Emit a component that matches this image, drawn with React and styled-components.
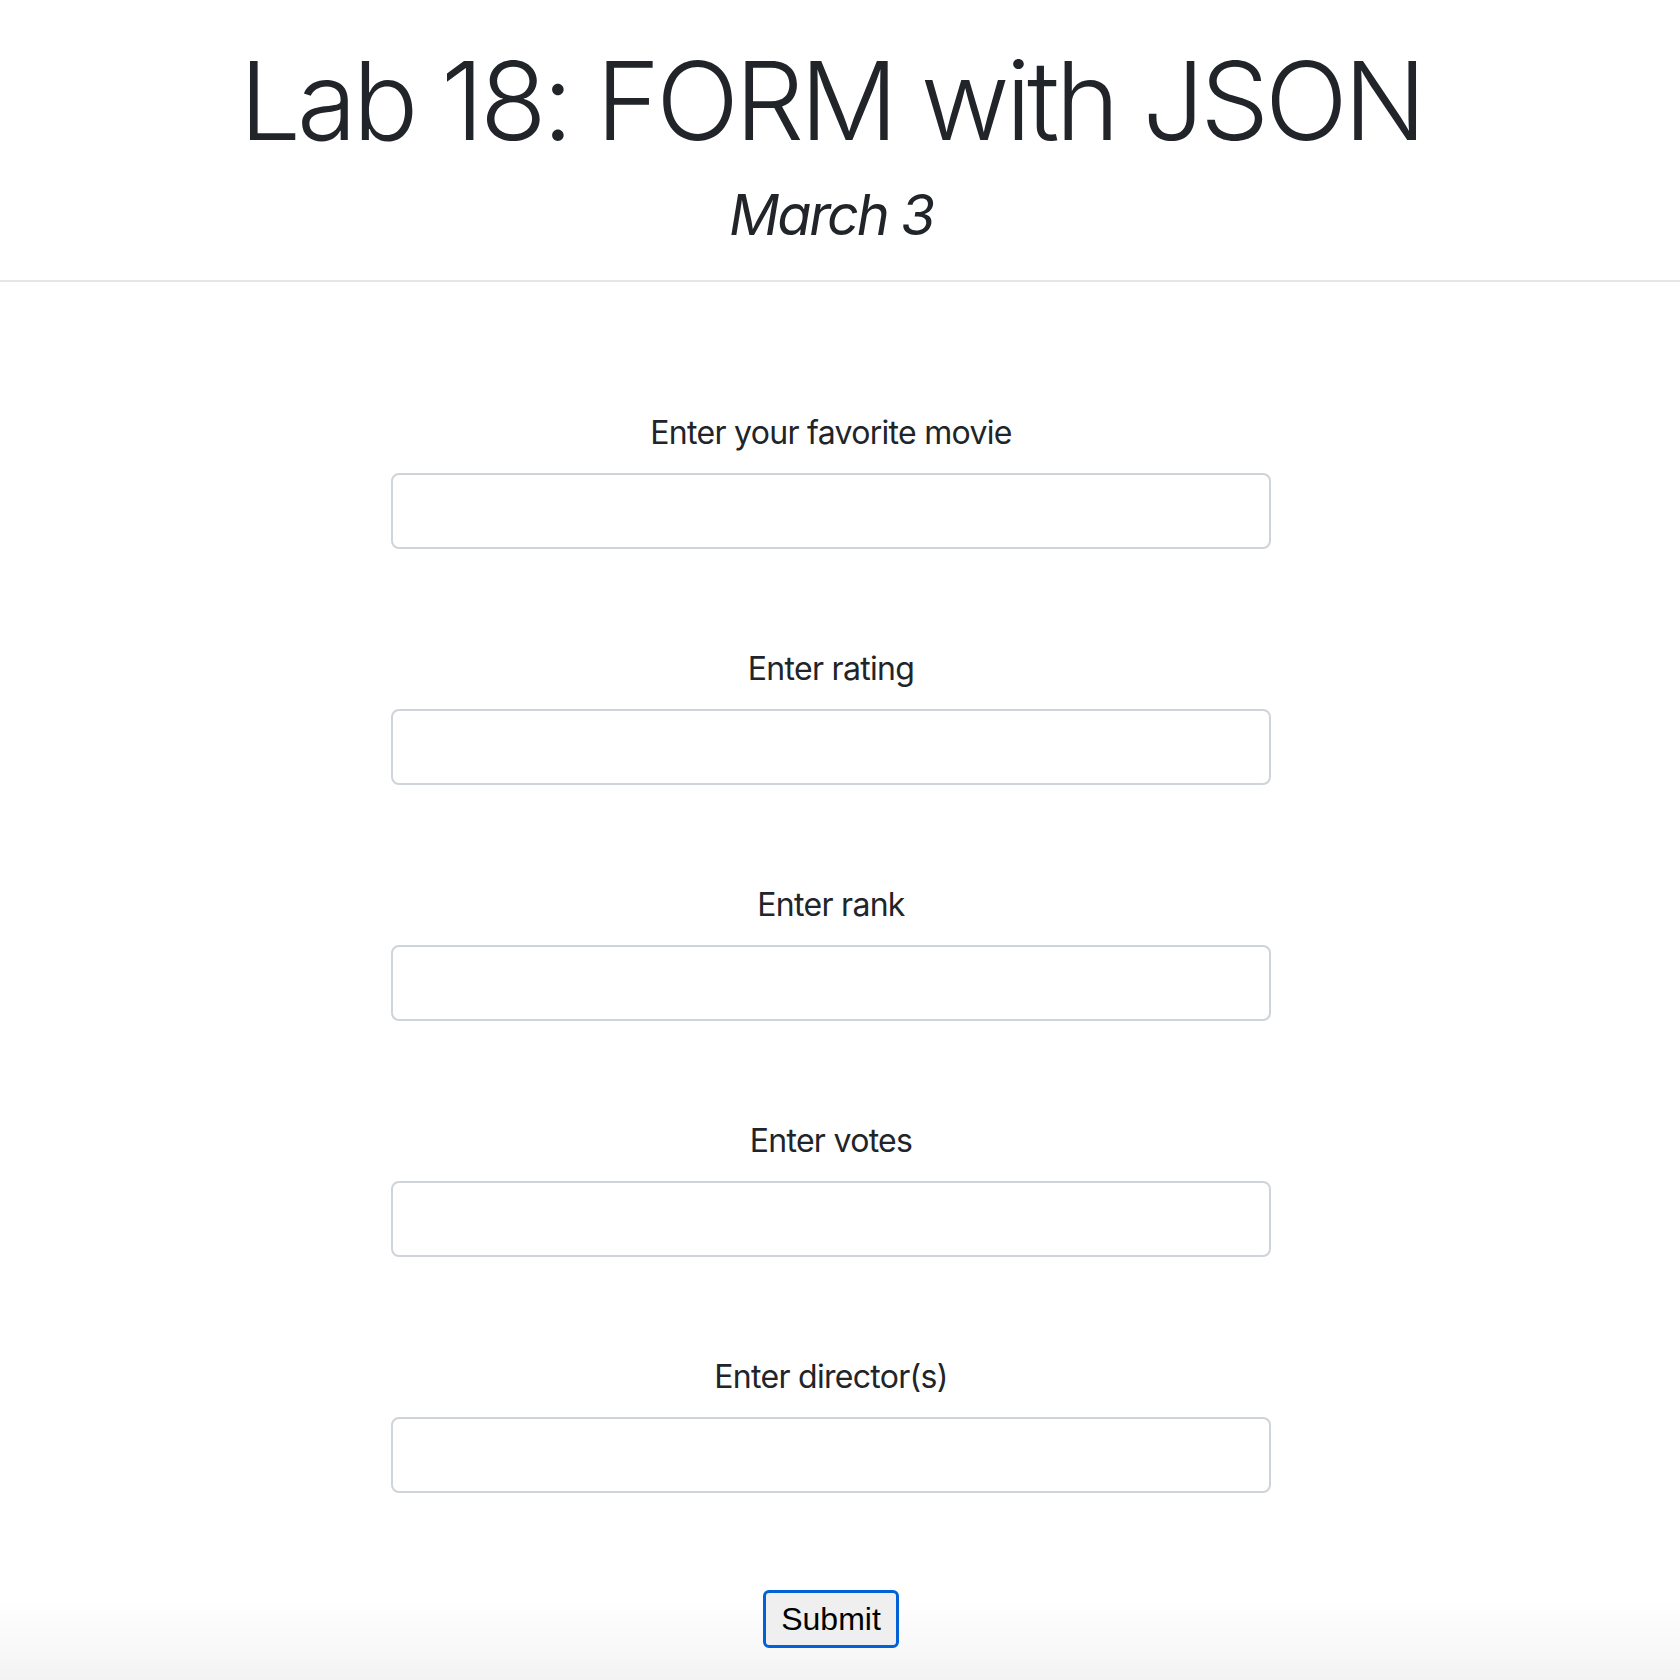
import styled, { createGlobalStyle } from 'styled-components'

const GlobalStyle = createGlobalStyle`
  html, body {
    margin: 0;
    padding: 0;
  }
  body {
    font-family: Inter, "Liberation Sans", sans-serif;
    color: #212529;
    background: #ffffff;
  }
  * {
    box-sizing: border-box;
  }
`

const FIELDS = [
  { id: 'movie', label: 'Enter your favorite movie' },
  { id: 'rating', label: 'Enter rating' },
  { id: 'rank', label: 'Enter rank' },
  { id: 'votes', label: 'Enter votes' },
  { id: 'directors', label: 'Enter director(s)' },
]

export default function App() {
  return (
    <>
      <GlobalStyle />
      <Page>
        <Header>
          <Title>Lab 18: FORM with JSON</Title>
          <SubTitle>March 3</SubTitle>
        </Header>
        <Form onSubmit={(e) => e.preventDefault()}>
          {FIELDS.map(({ id, label }) => (
            <Group key={id}>
              <Label htmlFor={id}>{label}</Label>
              <Input id={id} type="text" />
            </Group>
          ))}
          <SubmitButton type="submit">Submit</SubmitButton>
        </Form>
      </Page>
    </>
  )
}

const Page = styled.div`
  min-height: 1680px;
  background: linear-gradient(to bottom, #ffffff 0, #ffffff 1600px, #f3f3f3 1680px);
`

const Header = styled.header`
  padding: 35px 18px 31px 0;
  border-bottom: 2px solid #e6e6e6;
  text-align: center;
`

const Title = styled.h1`
  margin: 0 0 16px;
  font-size: 109px;
  font-weight: 300;
  line-height: 1.2;
  letter-spacing: -4px;
  color: #212529;
`

const SubTitle = styled.h3`
  margin: 0;
  font-size: 56px;
  font-style: italic;
  font-weight: 400;
  line-height: 1.2;
  letter-spacing: -2.4px;
  color: #212529;
`

const Form = styled.form`
  display: flex;
  flex-direction: column;
  align-items: center;
  gap: 96px;
  padding: 127px 18px 0 0;
`

const Group = styled.div`
  display: flex;
  flex-direction: column;
  align-items: center;
  gap: 16px;
  width: 880px;
`

const Label = styled.label`
  font-size: 32px;
  line-height: 48px;
  letter-spacing: -0.7px;
  color: #212529;
`

const Input = styled.input`
  width: 100%;
  height: 76px;
  padding: 12px 24px;
  border: 2px solid #ced4da;
  border-radius: 8px;
  background: #ffffff;
  font: inherit;
  font-size: 32px;
  color: #495057;
  outline: none;
`

const SubmitButton = styled.button`
  margin-top: 1px;
  height: 58px;
  padding: 0 15px;
  border: 3px solid #0062d6;
  border-radius: 6px;
  background: #efefef;
  color: #000000;
  font-family: "Liberation Sans", Arial, sans-serif;
  font-size: 32px;
  line-height: 1;
  cursor: pointer;
`
